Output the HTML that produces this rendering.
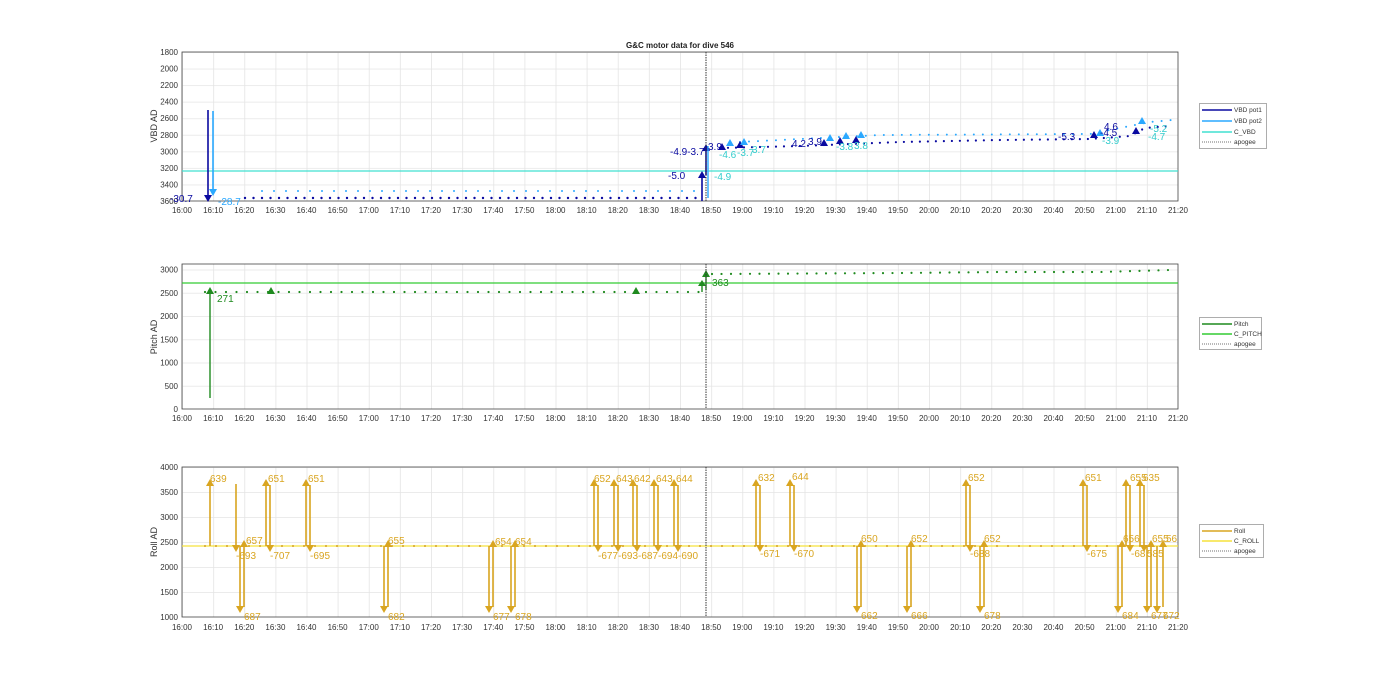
<!DOCTYPE html>
<html><head><meta charset="utf-8"><style>
html,body{margin:0;padding:0;background:#fff;width:1400px;height:693px;overflow:hidden}
svg{display:block;font-family:"Liberation Sans",Arial,sans-serif}
.t{font-size:8px;fill:#333}
.ax{fill:none;stroke:#444;stroke-width:0.8}
</style></head><body>
<svg width="1400" height="693" viewBox="0 0 1400 693">
<defs>
<pattern id="gv" x="182" y="0" width="31.125" height="693" patternUnits="userSpaceOnUse"><line x1="0.5" y1="0" x2="0.5" y2="693" stroke="#e4e4e4" stroke-width="0.8"/></pattern>
<pattern id="h1" x="0" y="52" width="1400" height="16.556" patternUnits="userSpaceOnUse"><line x1="0" y1="0.5" x2="1400" y2="0.5" stroke="#e4e4e4" stroke-width="0.8"/></pattern>
<pattern id="h2" x="0" y="409" width="1400" height="23.25" patternUnits="userSpaceOnUse"><line x1="0" y1="0.5" x2="1400" y2="0.5" stroke="#e4e4e4" stroke-width="0.8"/></pattern>
<pattern id="h3" x="0" y="467" width="1400" height="25" patternUnits="userSpaceOnUse"><line x1="0" y1="0.5" x2="1400" y2="0.5" stroke="#e4e4e4" stroke-width="0.8"/></pattern>
</defs>
<rect width="1400" height="693" fill="#fff"/>
<!-- ===== TOP ===== -->
<rect x="182" y="52" width="996" height="149" fill="url(#gv)"/>
<rect x="182" y="52" width="996" height="149" fill="url(#h1)"/>
<rect x="182" y="52" width="996" height="149" class="ax"/>
<text x="680" y="48" text-anchor="middle" font-size="8" font-weight="bold" fill="#222">G&amp;C motor data for dive 546</text>
<text x="157" y="126" font-size="9" fill="#333" text-anchor="middle" transform="rotate(-90 157 126)">VBD AD</text>
<g class="t" text-anchor="end">
<text x="178" y="55">1800</text><text x="178" y="71.6">2000</text><text x="178" y="88.1">2200</text><text x="178" y="104.7">2400</text><text x="178" y="121.2">2600</text><text x="178" y="137.8">2800</text><text x="178" y="154.3">3000</text><text x="178" y="170.9">3200</text><text x="178" y="187.4">3400</text><text x="178" y="204">3600</text>
</g>
<line x1="182" y1="171" x2="1178" y2="171" stroke="#40e0d0" stroke-width="1.3"/>
<polyline points="245,198 700,198" fill="none" stroke="#0a0aa0" stroke-width="2.4" stroke-linecap="round" stroke-dasharray="0 8.5"/>
<polyline points="262,191 700,191" fill="none" stroke="#2aa8ff" stroke-width="2" stroke-linecap="round" stroke-dasharray="0 12"/>
<polyline points="720,148 800,146 900,142 1000,140 1090,139 1130,136 1145,128 1170,126" fill="none" stroke="#0a0aa0" stroke-width="2.2" stroke-linecap="round" stroke-dasharray="0 8"/>
<polyline points="740,142 880,135 1090,134 1150,122 1172,120" fill="none" stroke="#2aa8ff" stroke-width="2" stroke-linecap="round" stroke-dasharray="0 9"/>
<line x1="208" y1="110" x2="208" y2="196" stroke="#0a0aa0" stroke-width="1.6"/><polygon points="204,195 212,195 208,202" fill="#0a0aa0"/>
<line x1="213" y1="111" x2="213" y2="190" stroke="#2aa8ff" stroke-width="1.6"/><polygon points="209,189 217,189 213,196" fill="#2aa8ff"/>
<text x="170" y="202" font-size="10" fill="#0a0aa0">-30.7</text>
<text x="218" y="205" font-size="10" fill="#2aa8ff">-28.7</text>
<line x1="702" y1="201" x2="702" y2="177" stroke="#0a0aa0" stroke-width="1.6"/><polygon points="698,178 706,178 702,171" fill="#0a0aa0"/>
<line x1="706" y1="175" x2="706" y2="150" stroke="#0a0aa0" stroke-width="1.6"/><polygon points="702,151 710,151 706,144" fill="#0a0aa0"/>
<line x1="708" y1="198" x2="708" y2="146" stroke="#2aa8ff" stroke-width="1.4"/>
<text x="668" y="179" font-size="10" fill="#0a0aa0">-5.0</text>
<text x="670" y="155" font-size="10" fill="#0a0aa0">-4.9-3.7</text>
<text x="714" y="180" font-size="10" fill="#3cc">-4.9</text>
<g fill="#0a0aa0"><polygon points="718,150 726,150 722,143"/><polygon points="736,148 744,148 740,141"/><polygon points="820,146 828,146 824,139"/><polygon points="836,144 844,144 840,137"/><polygon points="852,143 860,143 856,136"/><polygon points="1090,138 1098,138 1094,131"/><polygon points="1132,134 1140,134 1136,127"/></g>
<g fill="#2aa8ff"><polygon points="726,146 734,146 730,139"/><polygon points="740,145 748,145 744,138"/><polygon points="826,141 834,141 830,134"/><polygon points="842,139 850,139 846,132"/><polygon points="857,138 865,138 861,131"/><polygon points="1096,136 1104,136 1100,129"/><polygon points="1138,124 1146,124 1142,117"/></g>
<g font-size="10" fill="#0a0aa0"><text x="708" y="150">3.9</text><text x="792" y="147">4.2</text><text x="808" y="145">3.9</text><text x="1058" y="140">-5.3</text><text x="1104" y="130">4.6</text><text x="1100" y="136">-4.5</text></g>
<g font-size="10" fill="#3cc"><text x="719" y="158">-4.6</text><text x="737" y="156">-3.7</text><text x="752" y="153">3.7</text><text x="836" y="150">-3.8</text><text x="854" y="149">3.8</text><text x="1102" y="144">-3.9</text><text x="1150" y="132">-5.2</text><text x="1148" y="140">-4.7</text></g>
<line x1="706" y1="52" x2="706" y2="201" stroke="#333" stroke-width="1" stroke-dasharray="1.5 1"/>
<g class="t" text-anchor="middle" id="xl1">
<text x="182" y="213">16:00</text><text x="213.1" y="213">16:10</text><text x="244.3" y="213">16:20</text><text x="275.4" y="213">16:30</text><text x="306.5" y="213">16:40</text><text x="337.6" y="213">16:50</text><text x="368.8" y="213">17:00</text><text x="399.9" y="213">17:10</text><text x="431" y="213">17:20</text><text x="462.1" y="213">17:30</text><text x="493.3" y="213">17:40</text><text x="524.4" y="213">17:50</text><text x="555.5" y="213">18:00</text><text x="586.6" y="213">18:10</text><text x="617.8" y="213">18:20</text><text x="648.9" y="213">18:30</text><text x="680" y="213">18:40</text><text x="711.1" y="213">18:50</text><text x="742.3" y="213">19:00</text><text x="773.4" y="213">19:10</text><text x="804.5" y="213">19:20</text><text x="835.6" y="213">19:30</text><text x="866.8" y="213">19:40</text><text x="897.9" y="213">19:50</text><text x="929" y="213">20:00</text><text x="960.1" y="213">20:10</text><text x="991.3" y="213">20:20</text><text x="1022.4" y="213">20:30</text><text x="1053.5" y="213">20:40</text><text x="1084.6" y="213">20:50</text><text x="1115.8" y="213">21:00</text><text x="1146.9" y="213">21:10</text><text x="1178" y="213">21:20</text>
</g>
<rect x="1199.5" y="103.5" width="67" height="45" fill="#fff" stroke="#999" stroke-width="0.8"/>
<g font-size="6.5" fill="#333"><line x1="1202" y1="110" x2="1232" y2="110" stroke="#0a0aa0" stroke-width="1.5"/><text x="1234" y="112">VBD pot1</text>
<line x1="1202" y1="121" x2="1232" y2="121" stroke="#2aa8ff" stroke-width="1.5"/><text x="1234" y="123">VBD pot2</text>
<line x1="1202" y1="132" x2="1232" y2="132" stroke="#40e0d0" stroke-width="1.5"/><text x="1234" y="134">C_VBD</text>
<line x1="1202" y1="142" x2="1232" y2="142" stroke="#444" stroke-width="0.8" stroke-dasharray="1 1"/><text x="1234" y="144">apogee</text></g>
<!-- ===== MID ===== -->
<rect x="182" y="264" width="996" height="145" fill="url(#gv)"/>
<rect x="182" y="264" width="996" height="145" fill="url(#h2)"/>
<rect x="182" y="264" width="996" height="145" class="ax"/>
<text x="157" y="337" font-size="9" fill="#333" text-anchor="middle" transform="rotate(-90 157 337)">Pitch AD</text>
<g class="t" text-anchor="end"><text x="178" y="412">0</text><text x="178" y="388.8">500</text><text x="178" y="365.5">1000</text><text x="178" y="342.3">1500</text><text x="178" y="319">2000</text><text x="178" y="295.8">2500</text><text x="178" y="272.5">3000</text></g>
<line x1="182" y1="283" x2="1178" y2="283" stroke="#3c3" stroke-width="1.3"/>
<polyline points="205,292 700,292" fill="none" stroke="#1f8a1f" stroke-width="2.2" stroke-linecap="round" stroke-dasharray="0 10.5"/>
<polyline points="712,274 900,273 1000,272 1100,272 1170,270" fill="none" stroke="#1f8a1f" stroke-width="2.2" stroke-linecap="round" stroke-dasharray="0 9.5"/>
<line x1="210" y1="398" x2="210" y2="294" stroke="#1f8a1f" stroke-width="1.4"/><polygon points="206,294 214,294 210,287" fill="#1f8a1f"/>
<polygon points="267,294 275,294 271,287" fill="#1f8a1f"/><polygon points="632,294 640,294 636,287" fill="#1f8a1f"/>
<line x1="702" y1="292" x2="702" y2="282" stroke="#1f8a1f" stroke-width="1.4"/><polygon points="698,286 706,286 702,280" fill="#1f8a1f"/>
<line x1="706" y1="290" x2="706" y2="276" stroke="#1f8a1f" stroke-width="1.4"/><polygon points="702,277 710,277 706,270" fill="#1f8a1f"/>
<text x="217" y="302" font-size="10" fill="#1f8a1f">271</text><text x="712" y="286" font-size="10" fill="#1f8a1f">363</text>
<line x1="706" y1="264" x2="706" y2="409" stroke="#333" stroke-width="1" stroke-dasharray="1.5 1"/>
<g class="t" text-anchor="middle">
<text x="182" y="421">16:00</text><text x="213.1" y="421">16:10</text><text x="244.3" y="421">16:20</text><text x="275.4" y="421">16:30</text><text x="306.5" y="421">16:40</text><text x="337.6" y="421">16:50</text><text x="368.8" y="421">17:00</text><text x="399.9" y="421">17:10</text><text x="431" y="421">17:20</text><text x="462.1" y="421">17:30</text><text x="493.3" y="421">17:40</text><text x="524.4" y="421">17:50</text><text x="555.5" y="421">18:00</text><text x="586.6" y="421">18:10</text><text x="617.8" y="421">18:20</text><text x="648.9" y="421">18:30</text><text x="680" y="421">18:40</text><text x="711.1" y="421">18:50</text><text x="742.3" y="421">19:00</text><text x="773.4" y="421">19:10</text><text x="804.5" y="421">19:20</text><text x="835.6" y="421">19:30</text><text x="866.8" y="421">19:40</text><text x="897.9" y="421">19:50</text><text x="929" y="421">20:00</text><text x="960.1" y="421">20:10</text><text x="991.3" y="421">20:20</text><text x="1022.4" y="421">20:30</text><text x="1053.5" y="421">20:40</text><text x="1084.6" y="421">20:50</text><text x="1115.8" y="421">21:00</text><text x="1146.9" y="421">21:10</text><text x="1178" y="421">21:20</text>
</g>
<rect x="1199.5" y="317.5" width="62" height="32" fill="#fff" stroke="#999" stroke-width="0.8"/>
<g font-size="6.5" fill="#333"><line x1="1202" y1="324" x2="1232" y2="324" stroke="#1f8a1f" stroke-width="1.5"/><text x="1234" y="326">Pitch</text>
<line x1="1202" y1="334" x2="1232" y2="334" stroke="#3c3" stroke-width="1.5"/><text x="1234" y="336">C_PITCH</text>
<line x1="1202" y1="344" x2="1232" y2="344" stroke="#444" stroke-width="0.8" stroke-dasharray="1 1"/><text x="1234" y="346">apogee</text></g>
<!-- ===== BOTTOM ===== -->
<rect x="182" y="467" width="996" height="150" fill="url(#gv)"/>
<rect x="182" y="467" width="996" height="150" fill="url(#h3)"/>
<rect x="182" y="467" width="996" height="150" class="ax"/>
<text x="157" y="542" font-size="9" fill="#333" text-anchor="middle" transform="rotate(-90 157 542)">Roll AD</text>
<g class="t" text-anchor="end"><text x="178" y="470">4000</text><text x="178" y="495">3500</text><text x="178" y="520">3000</text><text x="178" y="545">2500</text><text x="178" y="570">2000</text><text x="178" y="595">1500</text><text x="178" y="620">1000</text></g>
<line x1="182" y1="546" x2="1178" y2="546" stroke="#f5e23c" stroke-width="1.3"/>
<polyline points="205,546 1170,546" fill="none" stroke="#d4a020" stroke-width="2" stroke-linecap="round" stroke-dasharray="0 11"/>
<g stroke="#d9a520" stroke-width="1.6" fill="none">
<path d="M210 546V485M236 484V546M266 546V485M270 485V546M306 546V485M310 485V546M594 546V485M598 485V546M614 546V485M618 485V546M633 546V485M637 485V546M654 546V485M658 485V546M674 546V485M678 485V546M756 546V485M760 485V546M790 546V485M794 485V546M966 546V485M970 485V546M1083 546V485M1087 485V546M1126 546V485M1130 485V546M1140 546V485M1144 485V546"/>
<path d="M240 546V607M244 607V546M384 546V607M388 607V546M489 546V607M493 607V546M511 546V607M515 607V546M857 546V607M861 607V546M907 546V607M911 607V546M980 546V607M984 607V546M1118 546V607M1122 607V546M1147 546V607M1151 607V546M1157 546V607M1163 607V546"/>
</g>
<g fill="#d9a520">
<polygon points="206,486 214,486 210,479"/><polygon points="262,486 270,486 266,479"/><polygon points="302,486 310,486 306,479"/><polygon points="590,486 598,486 594,479"/><polygon points="610,486 618,486 614,479"/><polygon points="629,486 637,486 633,479"/><polygon points="650,486 658,486 654,479"/><polygon points="670,486 678,486 674,479"/><polygon points="752,486 760,486 756,479"/><polygon points="786,486 794,486 790,479"/><polygon points="962,486 970,486 966,479"/><polygon points="1079,486 1087,486 1083,479"/><polygon points="1122,486 1130,486 1126,479"/><polygon points="1136,486 1144,486 1140,479"/>
<polygon points="232,545 240,545 236,552"/><polygon points="266,545 274,545 270,552"/><polygon points="306,545 314,545 310,552"/><polygon points="594,545 602,545 598,552"/><polygon points="614,545 622,545 618,552"/><polygon points="633,545 641,545 637,552"/><polygon points="654,545 662,545 658,552"/><polygon points="674,545 682,545 678,552"/><polygon points="756,545 764,545 760,552"/><polygon points="790,545 798,545 794,552"/><polygon points="966,545 974,545 970,552"/><polygon points="1083,545 1091,545 1087,552"/><polygon points="1126,545 1134,545 1130,552"/><polygon points="1140,545 1148,545 1144,552"/>
<polygon points="236,606 244,606 240,613"/><polygon points="380,606 388,606 384,613"/><polygon points="485,606 493,606 489,613"/><polygon points="507,606 515,606 511,613"/><polygon points="853,606 861,606 857,613"/><polygon points="903,606 911,606 907,613"/><polygon points="976,606 984,606 980,613"/><polygon points="1114,606 1122,606 1118,613"/><polygon points="1143,606 1151,606 1147,613"/><polygon points="1153,606 1161,606 1157,613"/>
<polygon points="240,547 248,547 244,540"/><polygon points="384,547 392,547 388,540"/><polygon points="489,547 497,547 493,540"/><polygon points="511,547 519,547 515,540"/><polygon points="857,547 865,547 861,540"/><polygon points="907,547 915,547 911,540"/><polygon points="980,547 988,547 984,540"/><polygon points="1118,547 1126,547 1122,540"/><polygon points="1147,547 1155,547 1151,540"/><polygon points="1159,547 1167,547 1163,540"/>
</g>
<g font-size="10" fill="#d9a520">
<text x="210" y="482">639</text><text x="268" y="482">651</text><text x="308" y="482">651</text><text x="594" y="482">652</text><text x="616" y="482">643</text><text x="634" y="482">642</text><text x="656" y="482">643</text><text x="676" y="482">644</text><text x="758" y="481">632</text><text x="792" y="480">644</text><text x="968" y="481">652</text><text x="1085" y="481">651</text><text x="1130" y="481">655</text><text x="1143" y="481">635</text>
<text x="236" y="559">-693</text><text x="270" y="559">-707</text><text x="310" y="559">-695</text><text x="598" y="559">-677</text><text x="618" y="559">-693</text><text x="638" y="559">-687</text><text x="658" y="559">-694</text><text x="678" y="559">-690</text><text x="760" y="557">-671</text><text x="794" y="557">-670</text><text x="970" y="557">-688</text><text x="1087" y="557">-675</text><text x="1131" y="557">-68</text><text x="1147" y="557">585</text>
<text x="246" y="544">657</text><text x="388" y="544">655</text><text x="495" y="545">654</text><text x="515" y="545">654</text><text x="861" y="542">650</text><text x="911" y="542">652</text><text x="984" y="542">652</text><text x="1123" y="542">656</text><text x="1152" y="542">655</text><text x="1166" y="542">56</text>
<text x="244" y="620">687</text><text x="388" y="620">682</text><text x="493" y="620">677</text><text x="515" y="620">678</text><text x="861" y="619">662</text><text x="911" y="619">666</text><text x="984" y="619">678</text><text x="1122" y="619">684</text><text x="1151" y="619">677</text><text x="1163" y="619">672</text>
</g>
<line x1="706" y1="467" x2="706" y2="617" stroke="#333" stroke-width="1" stroke-dasharray="1.5 1"/>
<g class="t" text-anchor="middle">
<text x="182" y="630">16:00</text><text x="213.1" y="630">16:10</text><text x="244.3" y="630">16:20</text><text x="275.4" y="630">16:30</text><text x="306.5" y="630">16:40</text><text x="337.6" y="630">16:50</text><text x="368.8" y="630">17:00</text><text x="399.9" y="630">17:10</text><text x="431" y="630">17:20</text><text x="462.1" y="630">17:30</text><text x="493.3" y="630">17:40</text><text x="524.4" y="630">17:50</text><text x="555.5" y="630">18:00</text><text x="586.6" y="630">18:10</text><text x="617.8" y="630">18:20</text><text x="648.9" y="630">18:30</text><text x="680" y="630">18:40</text><text x="711.1" y="630">18:50</text><text x="742.3" y="630">19:00</text><text x="773.4" y="630">19:10</text><text x="804.5" y="630">19:20</text><text x="835.6" y="630">19:30</text><text x="866.8" y="630">19:40</text><text x="897.9" y="630">19:50</text><text x="929" y="630">20:00</text><text x="960.1" y="630">20:10</text><text x="991.3" y="630">20:20</text><text x="1022.4" y="630">20:30</text><text x="1053.5" y="630">20:40</text><text x="1084.6" y="630">20:50</text><text x="1115.8" y="630">21:00</text><text x="1146.9" y="630">21:10</text><text x="1178" y="630">21:20</text>
</g>
<rect x="1199.5" y="524.5" width="64" height="33" fill="#fff" stroke="#999" stroke-width="0.8"/>
<g font-size="6.5" fill="#333"><line x1="1202" y1="531" x2="1232" y2="531" stroke="#d9a520" stroke-width="1.5"/><text x="1234" y="533">Roll</text>
<line x1="1202" y1="541" x2="1232" y2="541" stroke="#f5e23c" stroke-width="1.5"/><text x="1234" y="543">C_ROLL</text>
<line x1="1202" y1="551" x2="1232" y2="551" stroke="#444" stroke-width="0.8" stroke-dasharray="1 1"/><text x="1234" y="553">apogee</text></g>
</svg>
</body></html>
